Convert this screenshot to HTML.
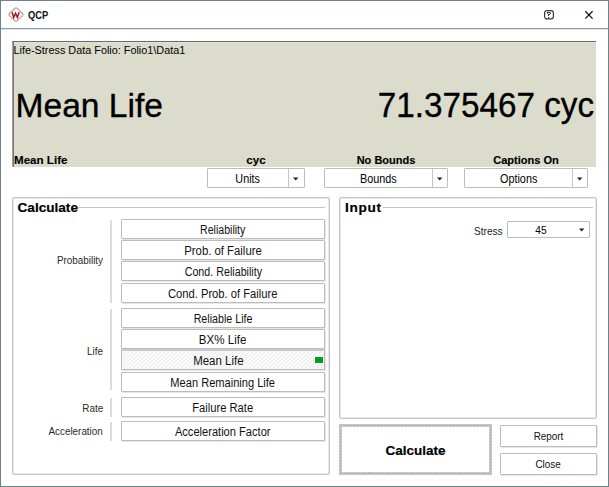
<!DOCTYPE html>
<html><head><meta charset="utf-8">
<style>
*{margin:0;padding:0;box-sizing:border-box}
html,body{width:609px;height:487px;overflow:hidden;background:#fff;font-family:"Liberation Sans",sans-serif;color:#000}
.a{position:absolute}
.win{left:0;top:0;width:609px;height:487px;border:1px solid #6b8286}
.tsep{left:1px;top:28px;width:607px;height:2px;background:linear-gradient(#8d9ea0 0 1px,#dfe5e6 1px 2px)}
.t{position:absolute;white-space:nowrap;line-height:1}
.panel{left:12px;top:41px;width:584px;height:126px;background:#dcdccd;border-top:1px solid #6a6a6a;border-left:1px solid #a2a2a2;box-shadow:inset 1px 0 0 #747474, inset 0 1px 0 #e3e3d6}
.combo{position:absolute;height:20px;border:1px solid #bdbdbd;background:#fff;border-radius:1px}
.combo .dv{position:absolute;top:0;bottom:0;width:1px;background:#c6c6c6}
.combo .ar{position:absolute;width:0;height:0;border-left:3px solid transparent;border-right:3px solid transparent;border-top:3px solid #222}
.combo .tx{position:absolute;top:1px;height:18px;line-height:18px;text-align:center;font-size:12px}
.grp{position:absolute;border:1px solid #c4c4c4;border-radius:2px;box-shadow:inset 0 0 0 1px #e8e8e8}
.gline{position:absolute;height:1px;background:#c6c6c6}
.vline{position:absolute;width:2px;background:#dcdcdc}
.btn{position:absolute;left:121px;width:204px;height:20px;border:1px solid #bcbcbc;border-radius:1px;box-shadow:1px 1px 0 #e6e6e6;background:#fff;text-align:center;line-height:18px;padding-top:0.5px;font-size:12px;color:#111}
.s{display:inline-block;transform-origin:50% 50%}
.lbl{position:absolute;right:506px;font-size:10.5px;color:#2a2a2a;white-space:nowrap;transform:scaleX(0.94);transform-origin:100% 0}
</style></head><body>
<div class="a win"></div>
<div class="a tsep"></div>
<!-- icon -->
<svg class="a" style="left:6px;top:5px" width="20" height="20" viewBox="0 0 20 20">
<path d="M3.4 8.5 L8.9 3.3 Q10 2.3 11.1 3.3 L16.6 8.5 Q17.7 9.6 16.6 10.7 L11.1 15.9 Q10 16.9 8.9 15.9 L3.4 10.7 Q2.3 9.6 3.4 8.5 Z" fill="#effafa" stroke="#d58a8f" stroke-width="1.1"/>
<path d="M6.1 7.2 L7.7 12.5 L9.6 8.3 L11.4 12.5 L13.1 7.2" fill="none" stroke="#a3121f" stroke-width="1.45" stroke-linejoin="miter" stroke-linecap="butt"/>
</svg>
<div class="t" style="left:28px;top:10px;font-size:10.8px;font-weight:bold;color:#111;transform:scaleX(0.86);transform-origin:0 0">QCP</div>
<!-- help -->
<svg class="a" style="left:543px;top:9px" width="12" height="12" viewBox="0 0 12 12">
<rect x="1.6" y="1.6" width="8.8" height="8.3" rx="2.3" fill="none" stroke="#3a3a3a" stroke-width="1.2"/>
<g fill="#333" shape-rendering="crispEdges"><rect x="4" y="3" width="3" height="1"/><rect x="7" y="4" width="1" height="1"/><rect x="6" y="5" width="1" height="1"/><rect x="5" y="5" width="1" height="2"/><rect x="5" y="8" width="1" height="1"/></g>
<g fill="#888" shape-rendering="crispEdges"><rect x="7" y="3" width="1" height="1"/><rect x="4" y="4" width="1" height="1"/></g>
</svg>
<!-- close -->
<svg class="a" style="left:583px;top:9px" width="12" height="12" viewBox="0 0 12 12">
<path d="M2.3 2.3 L9.6 9.6 M9.6 2.3 L2.3 9.6" stroke="#111" stroke-width="1.25"/>
</svg>

<div class="a panel"></div>
<div class="t" style="left:13.5px;top:45px;font-size:10.85px">Life-Stress Data Folio: Folio1\Data1</div>
<div class="t" style="left:15.5px;top:89px;font-size:33.6px;-webkit-text-stroke:0.35px #000">Mean Life</div>
<div class="t" style="right:15px;top:88px;font-size:34.3px;transform:scaleX(0.97);transform-origin:100% 0;-webkit-text-stroke:0.35px #000">71.375467 cyc</div>
<div class="t" style="left:14px;top:154px;font-size:11.6px;font-weight:bold;-webkit-text-stroke:0.15px #000">Mean Life</div>
<div class="t" style="left:207px;width:98px;text-align:center;top:154px;font-size:11.6px;font-weight:bold;-webkit-text-stroke:0.15px #000">cyc</div>
<div class="t" style="left:324px;width:124px;text-align:center;top:154.5px;font-size:11px;font-weight:bold;-webkit-text-stroke:0.15px #000">No Bounds</div>
<div class="t" style="left:464px;width:124px;text-align:center;top:154.5px;font-size:11.05px;font-weight:bold;-webkit-text-stroke:0.15px #000">Captions On</div>

<div class="combo" style="left:207px;top:168px;width:98px"><div class="tx" style="left:0;width:79px"><span class="s" style="transform:scaleX(0.9)">Units</span></div><div class="dv" style="left:80px"></div><svg class="a" style="left:85px;top:8px" width="6" height="4"><path d="M0 0.5 H5.4 L2.7 3.4 Z" fill="#222"/></svg></div>
<div class="combo" style="left:324px;top:168px;width:124px"><div class="tx" style="left:0;width:107px"><span class="s" style="transform:scaleX(0.9)">Bounds</span></div><div class="dv" style="left:107px"></div><svg class="a" style="left:112px;top:8px" width="6" height="4"><path d="M0 0.5 H5.4 L2.7 3.4 Z" fill="#222"/></svg></div>
<div class="combo" style="left:464px;top:168px;width:124px"><div class="tx" style="left:0;width:107px"><span class="s" style="transform:scaleX(0.9)">Options</span></div><div class="dv" style="left:107px"></div><svg class="a" style="left:112px;top:8px" width="6" height="4"><path d="M0 0.5 H5.4 L2.7 3.4 Z" fill="#222"/></svg></div>

<!-- Calculate group -->
<div class="grp" style="left:12px;top:197px;width:318px;height:278px"></div>
<div class="t" style="left:17.5px;top:201px;font-size:13.6px;font-weight:bold;-webkit-text-stroke:0.2px #000">Calculate</div>
<div class="gline" style="left:78px;top:207px;width:247px"></div>

<div class="vline" style="left:110px;top:220px;height:83px"></div>
<div class="vline" style="left:110px;top:309px;height:81px"></div>
<div class="vline" style="left:110px;top:398px;height:19px"></div>
<div class="vline" style="left:110px;top:422px;height:19px"></div>

<div class="lbl" style="top:254px">Probability</div>
<div class="lbl" style="top:345px">Life</div>
<div class="lbl" style="top:402px">Rate</div>
<div class="lbl" style="top:425px">Acceleration</div>

<div class="btn" style="top:219px"><span class="s" style="transform:scaleX(0.883)">Reliability</span></div>
<div class="btn" style="top:240px"><span class="s" style="transform:scaleX(0.945)">Prob. of Failure</span></div>
<div class="btn" style="top:261px"><span class="s" style="transform:scaleX(0.893)">Cond. Reliability</span></div>
<div class="btn" style="top:283px"><span class="s" style="transform:scaleX(0.933)">Cond. Prob. of Failure</span></div>
<div class="btn" style="top:308px"><span class="s" style="transform:scaleX(0.89)">Reliable Life</span></div>
<div class="btn" style="top:329px"><span class="s" style="transform:scaleX(0.965)">BX% Life</span></div>
<div class="btn" style="top:349px;height:21px;border-top:2px solid #c9c9c9;line-height:18px;overflow:hidden"><svg class="a" style="left:0;top:0" width="202" height="18"><defs><pattern id="hp" width="4" height="4" patternUnits="userSpaceOnUse"><rect width="4" height="4" fill="#fbfbfb"/><rect x="3" y="0" width="1" height="1" fill="#ebebeb"/><rect x="2" y="1" width="1" height="1" fill="#ebebeb"/><rect x="1" y="2" width="1" height="1" fill="#ebebeb"/><rect x="0" y="3" width="1" height="1" fill="#ebebeb"/><rect x="2" y="0" width="1" height="1" fill="#f7f7f7"/><rect x="1" y="1" width="1" height="1" fill="#f7f7f7"/><rect x="0" y="2" width="1" height="1" fill="#f7f7f7"/><rect x="3" y="3" width="1" height="1" fill="#f7f7f7"/></pattern></defs><rect width="202" height="18" fill="url(#hp)"/></svg><span class="s" style="position:relative;left:-4.5px;transform:scaleX(0.955)">Mean Life</span><div class="a" style="left:193px;top:6px;width:8px;height:6px;background:#0a9c1c"></div></div>
<div class="btn" style="top:372px"><span class="s" style="transform:scaleX(0.923)">Mean Remaining Life</span></div>
<div class="btn" style="top:397px"><span class="s" style="transform:scaleX(0.934)">Failure Rate</span></div>
<div class="btn" style="top:421px"><span class="s" style="transform:scaleX(0.925)">Acceleration Factor</span></div>

<!-- Input group -->
<div class="grp" style="left:339px;top:197px;width:258px;height:222px"></div>
<div class="t" style="left:345px;top:201px;font-size:13.6px;font-weight:bold;letter-spacing:0.7px;-webkit-text-stroke:0.2px #000">Input</div>
<div class="gline" style="left:383px;top:207px;width:210px"></div>
<div class="t" style="left:473.5px;top:226px;font-size:10.5px;color:#222;transform:scaleX(0.96);transform-origin:0 0">Stress</div>
<div class="combo" style="left:507px;top:221px;width:83px;height:17px"><div class="tx" style="left:0;width:66px;height:15px;line-height:15px;font-size:10.2px;top:0.5px">45</div><svg class="a" style="left:71px;top:6px" width="6" height="4"><path d="M0 0.5 H5.4 L2.7 3.4 Z" fill="#222"/></svg></div>

<!-- Bottom buttons -->
<svg class="a" style="left:339px;top:424px" width="153" height="51" shape-rendering="crispEdges"><rect x="0.5" y="0.5" width="152" height="50" fill="#fff" stroke="#c4c4c4"/><rect x="1.5" y="1.5" width="150" height="48" fill="none" stroke="#bcbcbc"/><rect x="2.5" y="2.5" width="148" height="46" fill="none" stroke="#d2d2d2"/><rect x="2.5" y="2.5" width="148" height="46" fill="none" stroke="#b2b2b2" stroke-dasharray="1 2"/><rect x="2" y="2" width="1" height="1" fill="#fff"/></svg>
<div class="t" style="left:339px;width:153px;text-align:center;top:443.5px;font-size:13.5px;font-weight:bold;-webkit-text-stroke:0.2px #000">Calculate</div>
<div class="btn" style="left:500px;top:425px;width:97px;height:22px;line-height:20px;font-size:11px;padding-top:0"><span class="s" style="transform:scaleX(0.9)">Report</span></div>
<div class="btn" style="left:500px;top:453px;width:97px;height:22px;line-height:20px;font-size:11px;padding-top:0"><span class="s" style="transform:scaleX(0.9)">Close</span></div>
</body></html>
